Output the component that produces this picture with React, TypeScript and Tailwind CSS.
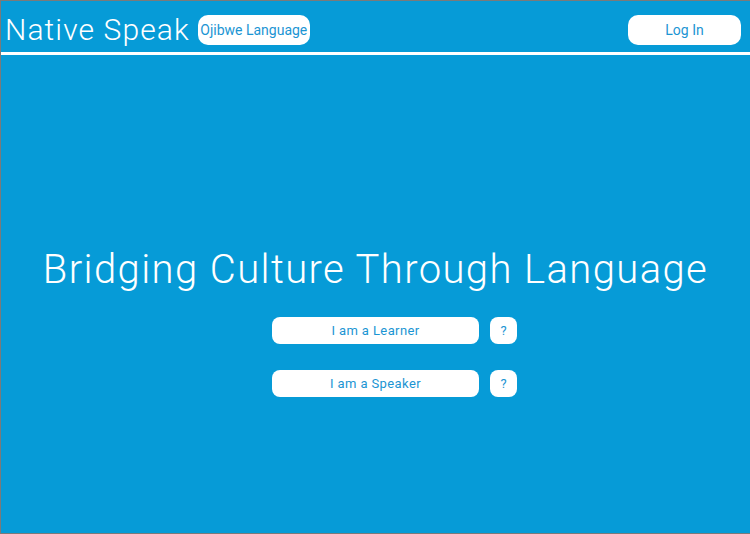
export default function App() {
  return (
    <div
      className="flex h-[534px] w-[750px] flex-col border-t border-b border-l border-[#7a7a7a] bg-[#069bd7] text-white"
      style={{ fontFamily: "Roboto, 'Liberation Sans', sans-serif" }}
    >
      <header className="flex h-[50px] items-center pl-[4px] pr-[9px] pt-[8px]">
        <span className="text-[30px] font-light leading-none tracking-[1.1px]">Native Speak</span>
        <button className="ml-[8px] flex h-[30px] w-[112px] items-center justify-center rounded-[10px] bg-white text-[14px] text-[#1b95d3]">
          Ojibwe Language
        </button>
        <button className="ml-auto flex h-[30px] w-[113px] items-center justify-center rounded-[10px] bg-white text-[14px] text-[#1b95d3]">
          Log In
        </button>
      </header>
      <div className="mt-[1px] h-[3px] bg-white" />
      <main className="flex flex-1 flex-col items-center pt-[191px]">
        <h1 className="text-[40px] font-light leading-[48px] tracking-[1.4px]">Bridging Culture Through Language</h1>
        <div className="mt-[23px] flex flex-col gap-[26px] pl-[38px]">
          {["I am a Learner", "I am a Speaker"].map((label) => (
            <div key={label} className="flex items-center gap-[11px]">
              <button className="flex h-[27px] w-[207px] items-center justify-center rounded-[8px] bg-white text-[13px] tracking-[0.4px] text-[#1b95d3]">
                {label}
              </button>
              <button className="flex h-[27px] w-[27px] items-center justify-center rounded-[8px] bg-white text-[13px] text-[#1b95d3]">
                ?
              </button>
            </div>
          ))}
        </div>
      </main>
    </div>
  );
}
